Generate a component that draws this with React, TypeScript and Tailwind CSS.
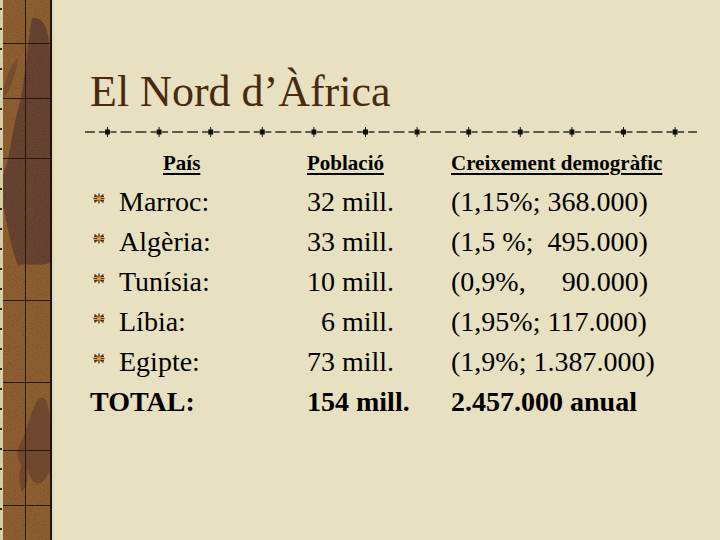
const serif = { fontFamily: '"Liberation Serif", "Times New Roman", serif' };

const rows = [
  { name: 'Marroc:', pop: '32 mill.', growth: '(1,15%; 368.000)' },
  { name: 'Algèria:', pop: '33 mill.', growth: '(1,5 %;  495.000)' },
  { name: 'Tunísia:', pop: '10 mill.', growth: null },
  { name: 'Líbia:', pop: '6 mill.', growth: '(1,95%; 117.000)' },
  { name: 'Egipte:', pop: '73 mill.', growth: '(1,9%; 1.387.000)' },
];

function SideStrip() {
  const hLines = [43, 98, 158, 300, 382, 450, 505];
  const dots = Array.from({ length: 27 }, (_, i) => 8 + i * 20);
  return (
    <svg width="54" height="540" viewBox="0 0 54 540" className="block shrink-0">
      <defs>
        <filter id="grain" x="0" y="0" width="100%" height="100%">
          <feTurbulence type="fractalNoise" baseFrequency="0.9" numOctaves="2" seed="3" />
          <feColorMatrix type="matrix" values="0 0 0 0 0.15  0 0 0 0 0.08  0 0 0 0 0.04  0 0 0 1.6 -0.55" />
        </filter>
      </defs>
      <rect x="0" y="0" width="54" height="540" fill="#d8cda6" />
      <rect x="3" y="0" width="47" height="540" fill="#94612b" />
      {/* dark patches */}
      <path d="M32 18 C44 16 50 30 50 60 L50 262 C40 268 28 262 18 266 C12 250 8 230 3 205 L3 175 C10 160 12 130 18 110 C24 90 26 55 32 18 Z" fill="#623d2c" />
      <path d="M3 90 C8 70 14 60 18 58 C16 75 10 90 3 100 Z" fill="#7a4c2a" />
      <path d="M38 400 C46 392 50 405 50 430 L50 470 C42 490 32 486 28 470 C20 466 14 455 20 444 C28 430 30 410 38 400 Z" fill="#70452a" />
      <path d="M24 462 C30 470 28 486 22 492 C18 480 18 470 24 462 Z" fill="#70452a" />
      <rect x="3" y="0" width="47" height="540" filter="url(#grain)" />
      <line x1="25.5" y1="0" x2="25.5" y2="540" stroke="#2a1510" strokeWidth="1" />
      {hLines.map((y) => (
        <line key={y} x1="3" y1={y + 0.5} x2="50" y2={y + 0.5} stroke="#2a1510" strokeWidth="1" />
      ))}
      <rect x="50" y="0" width="2" height="540" fill="#1e120c" />
      <rect x="52" y="0" width="2" height="540" fill="#e2d9b6" />
      {dots.map((y) => (
        <rect key={y} x="0" y={y} width="2" height="2" fill="#3a2a1a" />
      ))}
    </svg>
  );
}

function DashRule() {
  const centers = Array.from({ length: 12 }, (_, i) => 107.5 + i * 51.6 - 85);
  const segs: [number, number][] = [];
  [-51.6 + centers[0], ...centers].forEach((c) => {
    [[3, 9], [13, 24], [28, 39], [43, 49]].forEach(([a, b]) => {
      const s = Math.max(0, c + a);
      const e = Math.min(612, c + b);
      if (e > s) segs.push([s, e]);
    });
  });
  return (
    <svg width="612" height="12" viewBox="0 0 612 12" className="block">
      {segs.map(([s, e], i) => (
        <line key={i} x1={s} y1="6" x2={e} y2="6" stroke="#222" strokeWidth="1.4" />
      ))}
      {centers.map((c) => (
        <g key={c}>
          <rect x={c - 2.5} y="3.5" width="5" height="5" fill="#111" />
          <line x1={c} y1="1" x2={c} y2="11" stroke="#111" strokeWidth="1" />
        </g>
      ))}
    </svg>
  );
}

function Bullet() {
  return (
    <svg width="12" height="11" viewBox="0 0 12 11" className="shrink-0 mb-[8px]">
      <g stroke="#5a2e12" strokeWidth="1.3">
        <line x1="6" y1="0.5" x2="6" y2="10.5" />
        <line x1="0.5" y1="5.5" x2="11.5" y2="5.5" />
        <line x1="1.5" y1="1.5" x2="10.5" y2="9.5" />
        <line x1="10.5" y1="1.5" x2="1.5" y2="9.5" />
        <line x1="1" y1="3.5" x2="11" y2="3.5" />
        <line x1="1" y1="7.5" x2="11" y2="7.5" />
      </g>
      <rect x="4" y="3.5" width="4" height="4" fill="#e8902c" />
    </svg>
  );
}

export default function App() {
  return (
    <div className="w-[720px] h-[540px] overflow-hidden flex bg-[#e7e1c1]" style={serif}>
      <SideStrip />

      <div className="flex-1 pl-[36px]">
        {/* Title */}
        <h1 className="pt-[70px] text-[44px] leading-[44px] text-[#4a2a0e]">El Nord d’Àfrica</h1>
        <div className="mt-[12px] -ml-[5px]">
          <DashRule />
        </div>

        {/* Table */}
        <div className="mt-[13px] grid grid-cols-[217px_144px_1fr] text-black text-[21px] leading-[24px] font-bold">
          <div className="pl-[73px] underline underline-offset-[3px]">País</div>
          <div className="underline underline-offset-[3px]">Població</div>
          <div className="underline underline-offset-[3px]">Creixement demogràfic</div>
        </div>

        <div className="mt-[7px] grid grid-cols-[217px_144px_1fr] text-[28px] leading-[40px] text-black">
          {rows.map((r) => (
            <div key={r.name} className="contents">
              <div className="flex items-center pl-[3px]">
                <Bullet />
                <span className="ml-[14px]">{r.name}</span>
              </div>
              <div className={r.pop === '6 mill.' ? 'pl-[14px]' : ''}>{r.pop}</div>
              <div className="whitespace-pre">
                {r.growth ?? (
                  <>
                    (0,9%,<span className="ml-[36px]">90.000)</span>
                  </>
                )}
              </div>
            </div>
          ))}
          <div className="font-bold">TOTAL:</div>
          <div className="font-bold">154 mill.</div>
          <div className="font-bold">2.457.000 anual</div>
        </div>
      </div>
    </div>
  );
}
